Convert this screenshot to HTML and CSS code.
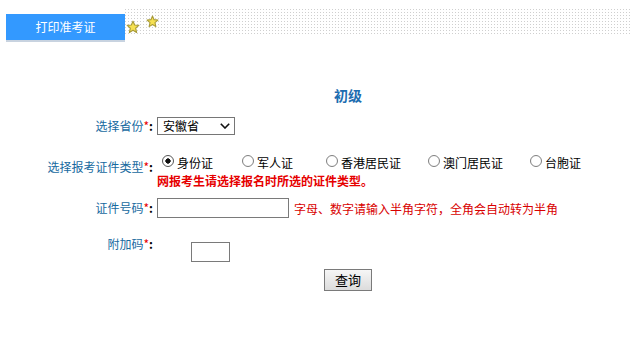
FILE: index.html
```html
<!DOCTYPE html>
<html lang="zh-CN">
<head>
<meta charset="utf-8">
<title>打印准考证</title>
<link rel="stylesheet" href="styles.css">
</head>
<body>
<div class="header">
  <div class="tab">打印准考证</div>
  <div class="strip">
    <svg class="star star-a" viewBox="0 0 24 24" width="14" height="14"><path d="M12 2 L14.9 8.6 L22 9.3 L16.6 14 L18.2 21.5 L12 17.6 L5.8 21.5 L7.4 14 L2 9.3 L9.1 8.6 Z" fill="#f6e152" stroke="#a89b3a" stroke-width="2" stroke-linejoin="round"/></svg>
    <svg class="star star-b" viewBox="0 0 24 24" width="13" height="13"><path d="M12 2 L14.9 8.6 L22 9.3 L16.6 14 L18.2 21.5 L12 17.6 L5.8 21.5 L7.4 14 L2 9.3 L9.1 8.6 Z" fill="#f6e152" stroke="#a89b3a" stroke-width="2" stroke-linejoin="round"/></svg>
  </div>
</div>
<div class="main">
  <h2 class="title">初级</h2>
  <div class="row row-province">
    <label class="lbl">选择省份<span class="req">*</span><b class="colon">:</b></label>
    <div class="field">
      <span class="select-wrap">
        <select class="sel"><option>安徽省</option></select>
        <svg class="chev" viewBox="0 0 10 6" width="10" height="6"><path d="M0.8 0.8 L5 5 L9.2 0.8" fill="none" stroke="#111" stroke-width="1.6"/></svg>
      </span>
    </div>
  </div>
  <div class="row row-type">
    <label class="lbl">选择报考证件类型<span class="req">*</span><b class="colon">:</b></label>
    <div class="field">
      <div class="radios">
        <label class="opt"><input type="radio" name="t" checked>身份证</label>
        <label class="opt"><input type="radio" name="t">军人证</label>
        <label class="opt"><input type="radio" name="t">香港居民证</label>
        <label class="opt"><input type="radio" name="t">澳门居民证</label>
        <label class="opt"><input type="radio" name="t">台胞证</label>
      </div>
      <div class="note">网报考生请选择报名时所选的证件类型。</div>
    </div>
  </div>
  <div class="row row-id">
    <label class="lbl">证件号码<span class="req">*</span><b class="colon">:</b></label>
    <div class="field field-inline">
      <input type="text" class="txt txt-id">
      <span class="hint">字母、数字请输入半角字符，全角会自动转为半角</span>
    </div>
  </div>
  <div class="row row-code">
    <label class="lbl">附加码<span class="req">*</span><b class="colon">:</b></label>
    <div class="field">
      <input type="text" class="txt txt-code">
    </div>
  </div>
  <div class="actions">
    <button type="button" class="btn">查询</button>
  </div>
</div>
</body>
</html>
```

FILE: styles.css
```css
* { box-sizing: border-box; }
html, body { margin: 0; padding: 0; background: #fff; }
body {
  font-family: "Noto Sans CJK SC", "Noto Sans", sans-serif;
  font-size: 12px;
  color: #000;
  width: 632px;
  height: 346px;
  overflow: hidden;
}
.header {
  display: flex;
  align-items: flex-start;
  height: 46px;
}
.tab {
  flex: none;
  margin: 14px 0 0 6px;
  width: 119px;
  height: 26px;
  line-height: 26px;
  background: #3399ff;
  color: #fff;
  font-size: 12px;
  text-align: center;
  box-shadow: 0 2px 0 #c8d3e0;
}
.strip {
  flex: 1;
  position: relative;
  margin-top: 9px;
  height: 27px;
  background-image:
    linear-gradient(90deg, transparent 1px, #fff 1px),
    linear-gradient(180deg, #cfcfcf 1px, #fff 1px);
  background-size: 3px 3px, 3px 3px;
}
.star { position: absolute; display: block; }
.star-a { left: 1px; top: 11px; }
.star-b { left: 21px; top: 6px; }

.title {
  margin: 39px 0 0;
  padding-left: 64px;
  text-align: center;
  font-size: 14px;
  font-weight: bold;
  line-height: 20px;
  color: #1d6db0;
}
.row { display: flex; }
.lbl {
  flex: none;
  width: 153px;
  text-align: right;
  color: #176aa0;
  line-height: 18px;
}
.req { color: #e60000; }
.colon { color: #000; font-weight: bold; }
.field { margin-left: 4px; }

.row-province { margin-top: 12px; height: 18px; align-items: center; }
.select-wrap { position: relative; display: block; width: 78px; height: 18px; }
.sel {
  appearance: none;
  -webkit-appearance: none;
  display: block;
  width: 78px;
  height: 18px;
  margin: 0;
  padding: 0 0 0 5px;
  border: 1px solid #767676;
  border-radius: 0;
  background: #fff;
  font-family: inherit;
  font-size: 12px;
  line-height: 16px;
  color: #000;
}
.chev { position: absolute; right: 5px; top: 6px; }

.row-type { margin-top: 19px; align-items: flex-start; }
.row-type .lbl { margin-top: 4px; }
.radios {
  display: grid;
  grid-template-columns: 80px 84px 102px 102px auto;
  height: 18px;
  padding-left: 5px;
}
.opt { display: flex; align-items: center; line-height: 18px; white-space: nowrap; }
.opt input {
  appearance: none;
  -webkit-appearance: none;
  flex: none;
  width: 12px;
  height: 12px;
  margin: 0 3px 5px 0;
  border: 1px solid #808080;
  border-radius: 50%;
  background: radial-gradient(circle, #fff 0 55%, #ececec 100%);
}
.opt input:checked {
  border-color: #555;
  background: radial-gradient(circle, #111 0 2.4px, #fff 2.9px);
}
.note {
  line-height: 18px;
  font-weight: bold;
  color: #e60000;
}

.row-id { margin-top: 8px; height: 20px; align-items: center; }
.field-inline { display: flex; align-items: center; }
.txt {
  display: block;
  margin: 0;
  height: 20px;
  border: 1px solid #7a7a7a;
  border-radius: 0;
  background: #fff;
  font-family: inherit;
  font-size: 12px;
  padding: 0 2px;
}
.txt-id { width: 132px; }
.hint { margin-left: 5px; color: #d80000; line-height: 18px; padding-top: 2px; }

.row-code { margin-top: 18px; align-items: flex-start; }
.row-code .lbl { line-height: 16px; }
.txt-code { width: 39px; margin: 6px 0 0 34px; }

.actions {
  margin-top: 7px;
  padding-left: 64px;
  text-align: center;
}
.btn {
  width: 48px;
  height: 22px;
  margin: 0;
  padding: 0;
  border: 1px solid #7a7a7a;
  border-radius: 0;
  background: linear-gradient(#f6f6f6, #dcdcdc);
  font-family: inherit;
  font-size: 13px;
  color: #000;
  line-height: 20px;
}
```
